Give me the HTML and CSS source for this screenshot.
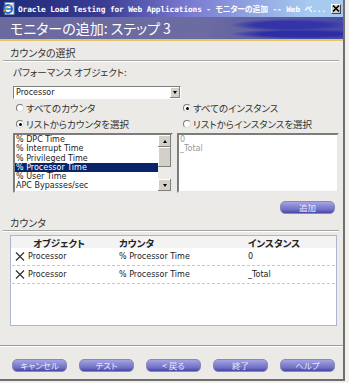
FILE: index.html
```html
<html>
    <head>
        <link rel="stylesheet" href="styles.css">
    </head>
    <body>
        <div class="window">
            <div class="titlebar">
                <svg class="app-icon" width="12" height="13" viewBox="0 0 12 13">
                    <rect x="2" y="0.5" width="9" height="12" fill="#fff" stroke="#7a8aa8"/>
                    <circle cx="5" cy="7" r="4" fill="none" stroke="#1d6fd8" stroke-width="2"/>
                    <path d="M1.5 7 H8.5" stroke="#1d6fd8" stroke-width="1.5"/>
                    <path d="M0.5 10 Q5 2 11 3" fill="none" stroke="#e0a020" stroke-width="1"/>
                </svg>
                <span class="title-text">Oracle Load Testing for Web Applications - モニターの追加 -- Web ペ...</span>
                <span class="close-btn">
                    <svg width="8" height="7" viewBox="0 0 8 7"><path d="M1 0.5 L7 6.5 M7 0.5 L1 6.5" stroke="#000" stroke-width="1.6"/></svg>
                </span>
            </div>
            <div class="banner">
                <h1>モニターの追加: ステップ 3</h1>
            </div>

            <div class="content">
                <div class="section-title">カウンタの選択</div>
                <div class="group">
                    <div class="field-label">パフォーマンス オブジェクト:</div>
                    <div class="select">
                        <span class="select-value">Processor</span>
                        <span class="select-drop"><i></i></span>
                    </div>
                    <div class="pickers">
                        <div class="col">
                            <div class="radio"><span class="dot"></span>すべてのカウンタ</div>
                            <div class="radio"><span class="dot on"></span>リストからカウンタを選択</div>
                            <div class="listbox">
                                <div class="items">
                                    <div class="item">% DPC Time</div>
                                    <div class="item">% Interrupt Time</div>
                                    <div class="item">% Privileged Time</div>
                                    <div class="item selected">% Processor Time</div>
                                    <div class="item">% User Time</div>
                                    <div class="item">APC Bypasses/sec</div>
                                </div>
                                <div class="scrollbar">
                                    <span class="sb-btn"><i class="up"></i></span>
                                    <span class="sb-thumb"></span>
                                    <span class="sb-track"></span>
                                    <span class="sb-btn"><i class="down"></i></span>
                                </div>
                            </div>
                        </div>
                        <div class="col col-right">
                            <div class="radio"><span class="dot on"></span>すべてのインスタンス</div>
                            <div class="radio"><span class="dot"></span>リストからインスタンスを選択</div>
                            <div class="listbox disabled">
                                <div class="items">
                                    <div class="item">0</div>
                                    <div class="item">_Total</div>
                                </div>
                            </div>
                        </div>
                    </div>
                </div>
                <div class="add-row">
                    <span class="btn">追加</span>
                </div>

                <div class="section-title">カウンタ</div>
                <div class="counter-table">
                    <div class="row head">
                        <span></span>
                        <span class="obj">オブジェクト</span>
                        <span>カウンタ</span>
                        <span>インスタンス</span>
                    </div>
                    <div class="row">
                        <span class="del"><svg width="10" height="9" viewBox="0 0 10 9"><path d="M1 0.5 L9 8.5 M9 0.5 L1 8.5" stroke="#333" stroke-width="1.2"/></svg></span>
                        <span>Processor</span>
                        <span>% Processor Time</span>
                        <span>0</span>
                    </div>
                    <div class="row">
                        <span class="del"><svg width="10" height="9" viewBox="0 0 10 9"><path d="M1 0.5 L9 8.5 M9 0.5 L1 8.5" stroke="#333" stroke-width="1.2"/></svg></span>
                        <span>Processor</span>
                        <span>% Processor Time</span>
                        <span>_Total</span>
                    </div>
                </div>
            </div>

            <div class="footer">
                <span class="btn">キャンセル</span>
                <span class="btn">テスト</span>
                <span class="btn">&lt; 戻る</span>
                <span class="btn">終了</span>
                <span class="btn">ヘルプ</span>
            </div>
        </div>
    </body>
</html>
```

FILE: styles.css
```css
:root {
    --c-bg: #ebeae6;
    --c-line: #a4a4a4;
    --c-navy: #0a246a;
    --c-table: #a9b7cf;
    --f-jp: "Noto Sans CJK JP", "DejaVu Sans", sans-serif;
    --f-ui: "DejaVu Sans", "Noto Sans CJK JP", sans-serif;
}

html, body {
    margin: 0;
    padding: 0;
}

body {
    width: 349px;
    height: 383px;
    background-color: #f2f1ee;
    overflow: hidden;
    font-family: var(--f-jp);
    font-feature-settings: "palt";
    color: #222;
}

.window {
    box-sizing: border-box;
    width: 345px;
    height: 381px;
    display: flex;
    flex-direction: column;
    background-color: var(--c-bg);
    border-right: 2px solid #6e6e6e;
    border-bottom: 2px solid #6e6e6e;
}

/* title bar */
.titlebar {
    height: 17px;
    display: flex;
    align-items: center;
    padding: 0 2px 0 3px;
    background: linear-gradient(to right, #1e2a78 0%, #3a3c94 30%, #7a7ad0 55%, #a6caf0 90%);
}
.app-icon {
    flex: none;
    margin-right: 3px;
}
.title-text {
    flex: 1;
    min-width: 0;
    white-space: nowrap;
    overflow: hidden;
    color: #fff;
    font-family: "DejaVu Sans Mono", "Noto Sans CJK JP", monospace;
    font-weight: bold;
    font-size: 7.8px;
    letter-spacing: -0.1px;
}
.close-btn {
    flex: none;
    box-sizing: border-box;
    width: 10px;
    height: 10px;
    margin-left: 2px;
    display: flex;
    align-items: center;
    justify-content: center;
    background-color: #d4d0c8;
    border: 1px solid;
    border-color: #fff #404040 #404040 #fff;
}

/* banner */
.banner {
    height: 22px;
    display: flex;
    align-items: center;
    padding-left: 10px;
    border-bottom: 2px solid #e6c46a;
    background:
        radial-gradient(ellipse 60px 6px at 290px 8px, #3434a8 0%, #3434a8 60%, transparent 100%),
        radial-gradient(ellipse 70px 5px at 300px 17px, #2d2da6 0%, #2d2da6 55%, transparent 100%),
        linear-gradient(to right, #6a6a9e 0%, #6c6ca2 60%, #4a4aa6 100%);
}
.banner h1 {
    margin: 0;
    color: #fff;
    font-size: 14px;
    font-weight: normal;
    line-height: 16px;
}

/* main content */
.content {
    flex: 1;
    padding: 5px 4px 0 3px;
}
.section-title {
    height: 14px;
    line-height: 14px;
    padding-left: 7px;
    font-size: 10px;
    color: #333;
    border-bottom: 1px solid var(--c-line);
    box-shadow: 0 1px 0 #fff;
}
.group {
    padding-left: 10px;
}
.field-label {
    margin-top: 5px;
    height: 12px;
    line-height: 12px;
    font-size: 9.5px;
    color: #333;
}
.select {
    box-sizing: border-box;
    width: 168px;
    height: 13px;
    margin-top: 8px;
    display: flex;
    background-color: #fff;
    border: 1px solid;
    border-color: #808080 #fff #fff #808080;
}
.select-value {
    flex: 1;
    padding-left: 2px;
    font-family: var(--f-ui);
    font-size: 8px;
    line-height: 11px;
}
.select-drop {
    width: 10px;
    display: flex;
    align-items: center;
    justify-content: center;
    background-color: #d4d0c8;
    box-shadow: inset -1px -1px #808080, inset 1px 1px #fff;
}
.select-drop i,
.sb-btn i.down {
    width: 0;
    height: 0;
    border-left: 2.5px solid transparent;
    border-right: 2.5px solid transparent;
    border-top: 3px solid #000;
}
.sb-btn i.up {
    width: 0;
    height: 0;
    border-left: 2.5px solid transparent;
    border-right: 2.5px solid transparent;
    border-bottom: 3px solid #000;
}

.pickers {
    margin-top: 2px;
    display: grid;
    grid-template-columns: 160px 1fr;
    column-gap: 4px;
}
.radio {
    height: 14px;
    margin-bottom: 2px;
    display: flex;
    align-items: center;
    padding-left: 3px;
    font-size: 9.5px;
    color: #333;
}
.col-right .radio {
    padding-left: 6px;
}
.dot {
    box-sizing: border-box;
    width: 8px;
    height: 8px;
    margin-right: 2px;
    border-radius: 50%;
    background-color: #fff;
    border: 1px solid;
    border-color: #7a7a7a #dcdcdc #dcdcdc #7a7a7a;
    position: relative;
}
.dot.on::after {
    content: "";
    position: absolute;
    left: 1.5px;
    top: 1.5px;
    width: 3px;
    height: 3px;
    border-radius: 50%;
    background-color: #000;
}

.listbox {
    box-sizing: border-box;
    height: 60px;
    margin-top: 2px;
    display: flex;
    background-color: #fff;
    border: 2px solid;
    border-color: #7c7c7c #e8e8e8 #e8e8e8 #7c7c7c;
}
.items {
    flex: 1;
    padding-top: 0;
    font-family: var(--f-ui);
    font-size: 8px;
    line-height: 9.3px;
    white-space: nowrap;
    overflow: hidden;
}
.item {
    padding-left: 1px;
}
.item.selected {
    background-color: var(--c-navy);
    color: #fff;
}
.listbox.disabled .items {
    color: #9a9a9a;
}
.scrollbar {
    width: 13px;
    display: flex;
    flex-direction: column;
}
.sb-btn {
    height: 12px;
    display: flex;
    align-items: center;
    justify-content: center;
    background-color: #d4d0c8;
    box-shadow: inset -1px -1px #808080, inset 1px 1px #fff;
}
.sb-thumb {
    height: 20px;
    background-color: #d4d0c8;
    box-shadow: inset -1px -1px #808080, inset 1px 1px #fff;
}
.sb-track {
    flex: 1;
    background-color: #ecebe8;
}

.add-row {
    display: flex;
    justify-content: flex-end;
    margin: 8px 4px 2px 0;
}

/* buttons */
.btn {
    box-sizing: border-box;
    width: 55px;
    height: 13px;
    display: flex;
    align-items: center;
    justify-content: center;
    border-radius: 5px;
    border: 1px solid #8a8ab0;
    background: linear-gradient(to bottom, #a4a4e4 0%, #8282d0 45%, #7070c4 70%, #4646a8 100%);
    color: #e8e8ff;
    font-size: 8.5px;
    line-height: 11px;
}

/* table */
.counter-table {
    box-sizing: border-box;
    height: 91px;
    margin: 4px 2px 0 7px;
    background-color: #fff;
    border: 1px solid var(--c-table);
}
.row {
    display: grid;
    grid-template-columns: 16px 91px 129px 1fr;
    align-items: center;
    height: 17px;
    margin: 0 1px;
    border-bottom: 1px dashed #c8c8c8;
    font-family: var(--f-ui);
    font-size: 8px;
}
.row.head {
    height: 12px;
    margin: 0;
    padding: 0 1px;
    background-color: #f3f3f3;
    border-bottom: none;
    font-family: var(--f-jp);
    font-weight: bold;
    font-size: 9.5px;
}
.row.head .obj {
    padding-left: 5px;
}
.del {
    display: flex;
    justify-content: center;
}

/* footer */
.footer {
    height: 34px;
    display: flex;
    gap: 12px;
    padding: 13px 0 0 12px;
    box-sizing: border-box;
    border-top: 1px solid #9c9c9c;
    box-shadow: inset 0 1px 0 #fff;
}
```
